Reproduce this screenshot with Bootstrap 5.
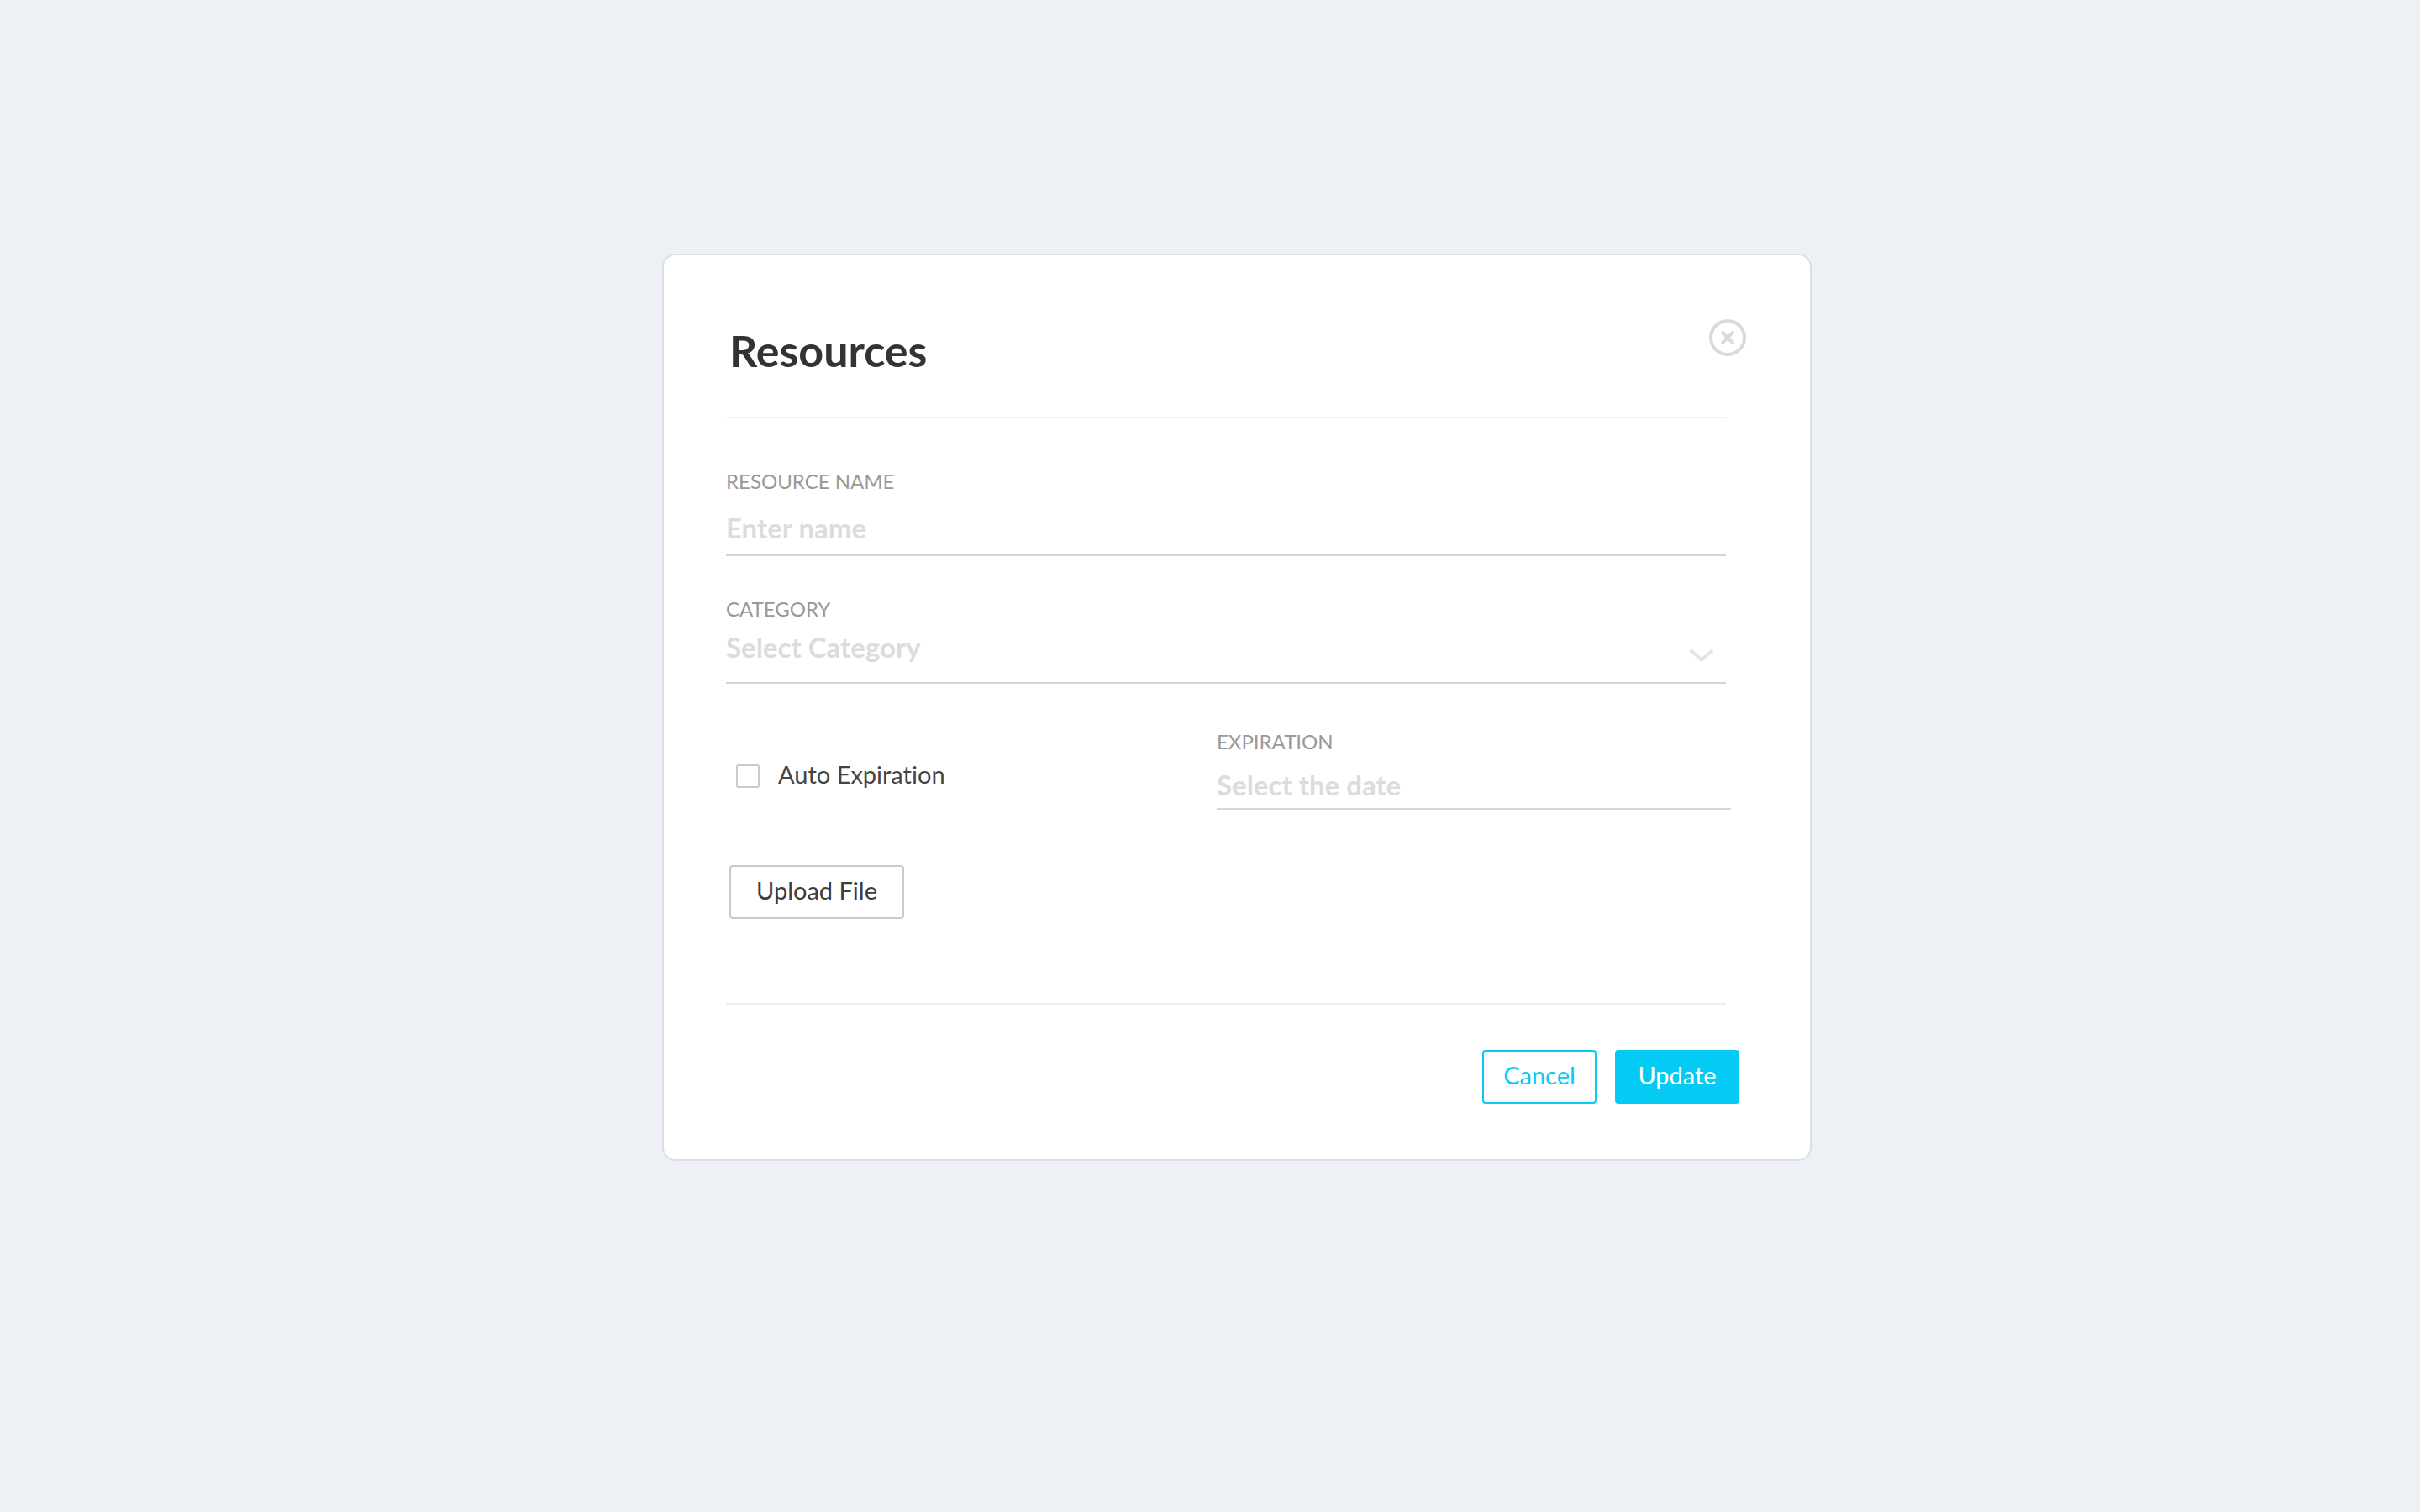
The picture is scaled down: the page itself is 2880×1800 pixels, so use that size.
<!DOCTYPE html>
<html lang="en">
<head>
<meta charset="utf-8">
<meta name="viewport" content="width=device-width, initial-scale=1">
<title>Resources</title>
<link rel="stylesheet" href="https://cdn.jsdelivr.net/npm/bootstrap@5.3.0/dist/css/bootstrap.min.css">
<style>
  body { background: #edf0f5; font-family: Lato, "Open Sans", sans-serif; color: #333; font-variant-ligatures: none; }
  .page-wrap { padding: 302px 0 120px 64px; }
  .panel { width: 100%; max-width: 1368px; border: 2px solid #d9dee8; border-radius: 16px; padding: 76px 74px 66px; }
  .panel-title { font-size: 52px; line-height: 74px; font-weight: 700; padding-left: 4px; }
  .btn-dismiss { width: 44px; height: 44px; margin-right: 2px; color: #dadada; }
  .rule { height: 2px; background: #efefef; margin: 0 26px 0 0; border: 0; opacity: 1; }
  .head-rule { margin-top: 42px; }
  .fields { padding: 60px 26px 0 0; gap: 48px; }
  .field-label { font-size: 24px; line-height: 30px; color: #999; text-transform: uppercase; }
  .line-control, .line-control:focus { display: block; width: 100%; border: 0; border-bottom: 2px solid #d6d6d6; border-radius: 0; background: transparent; color: #dcdcdc; font-size: 33px; line-height: 40px; font-weight: 700; padding: 20px 0 12px; height: 74px; outline: 0; box-shadow: none; appearance: none; }
  .line-control::placeholder { color: #dcdcdc; opacity: 1; }
  select.line-control, select.line-control:focus { padding: 10px 0 22px; }
  .date-control, .date-control:focus { height: 66px; padding: 16px 0 8px; }
  .chevron { right: 14px; bottom: 24px; pointer-events: none; }
  .expiry { display: grid; grid-template-columns: 584fr 612fr; margin: 54px 20px 0 0; }
  .auto-check { padding: 16px 0 0 12px; gap: 22px; font-size: 29px; line-height: 36px; color: #444; }
  .auto-check .form-check-input { width: 28px; height: 28px; margin: 0; border: 2px solid #c6cad6; border-radius: 3px; }
  .auto-check label { padding-bottom: 4px; }
  .btn-box { height: 64px; font-size: 29px; line-height: 36px; padding: 0 0 4px; border-width: 2px; border-radius: 4px; }
  .btn-upload { width: 208px; margin: 66px 0 100px 4px; border-color: #c6cad6; color: #3c3c3c; }
  .btn-cancel { width: 136px; border-color: #04caf4; color: #04caf4; }
  .btn-update { width: 148px; border-color: #04caf4; background: #04caf4; color: #fff; }
  .actions { padding: 54px 10px 0 0; gap: 22px; }
</style>
</head>
<body>
<main class="page-wrap d-flex justify-content-center">
  <form class="panel bg-white">
    <header class="d-flex justify-content-between align-items-start">
      <h1 class="panel-title m-0">Resources</h1>
      <button type="button" class="btn btn-dismiss p-0 border-0 d-flex" aria-label="Close">
        <svg width="44" height="44" viewBox="0 0 44 44" fill="none" stroke="currentColor" stroke-width="4" stroke-linecap="round"><circle cx="22" cy="22" r="20"/><path d="M16 16l12 12M28 16L16 28"/></svg>
      </button>
    </header>
    <hr class="rule head-rule">
    <div class="fields d-flex flex-column">
      <div>
        <label class="field-label d-block" for="resource-name">Resource name</label>
        <input class="line-control" type="text" id="resource-name" placeholder="Enter name">
      </div>
      <div class="position-relative">
        <label class="field-label d-block" for="category">Category</label>
        <select class="line-control" id="category"><option>Select Category</option></select>
        <svg class="chevron position-absolute" width="32" height="20" viewBox="0 0 32 20" fill="none" stroke="#e0e5ee" stroke-width="4" stroke-linecap="round" stroke-linejoin="round"><path d="M5 5l12 10.500L29 5"/></svg>
      </div>
    </div>
    <div class="expiry">
      <div class="auto-check d-flex align-items-center">
        <input class="form-check-input" type="checkbox" id="auto-expiration">
        <label for="auto-expiration">Auto Expiration</label>
      </div>
      <div>
        <label class="field-label d-block" for="expiration">Expiration</label>
        <input class="line-control date-control" type="text" id="expiration" placeholder="Select the date">
      </div>
    </div>
    <button type="button" class="btn btn-box btn-upload d-block">Upload File</button>
    <hr class="rule">
    <footer class="actions d-flex justify-content-end">
      <button type="button" class="btn btn-box btn-cancel">Cancel</button>
      <button type="submit" class="btn btn-box btn-update">Update</button>
    </footer>
  </form>
</main>
<script src="https://cdn.jsdelivr.net/npm/bootstrap@5.3.0/dist/js/bootstrap.bundle.min.js"></script>
</body>
</html>
